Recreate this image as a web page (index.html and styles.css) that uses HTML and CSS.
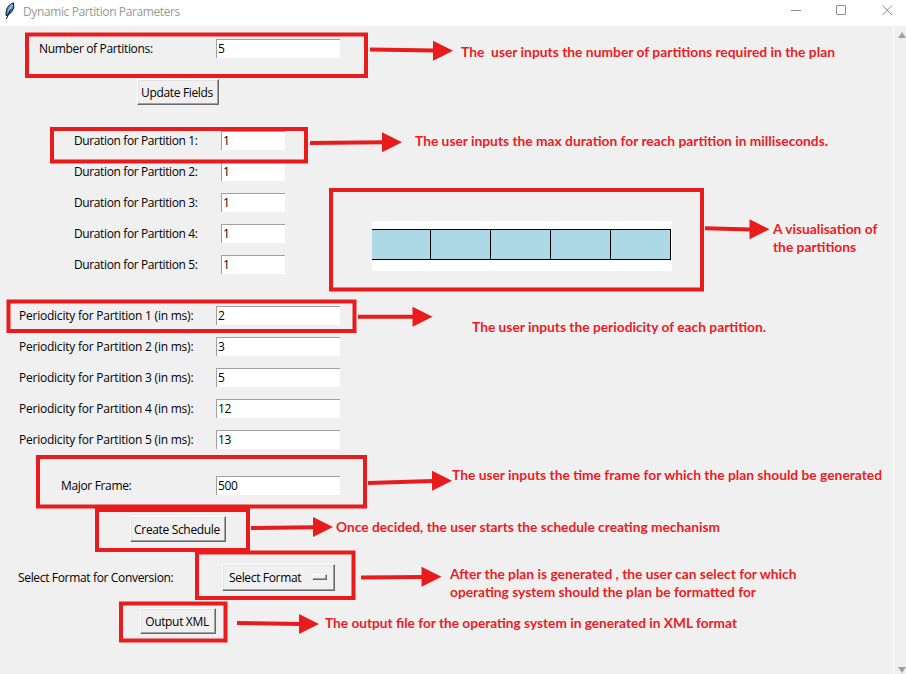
FILE: index.html
```html
<!DOCTYPE html>
<html lang="en">
<head>
<meta charset="utf-8">
<title>Dynamic Partition Parameters</title>
<link rel="stylesheet" href="styles.css">
</head>
<body>
<header class="titlebar">
  <svg class="feather" width="12" height="18" viewBox="0 0 12 18">
    <path d="M9.500 1C5.500 2 2.500 5.500 2.200 10L2 13.500 4.200 13 8 9.500 9.800 5.500Z" fill="#4b86cf" stroke="#111" stroke-width="1"/>
    <path d="M8.300 2.500 4.200 9.500" stroke="#8fc0f0" stroke-width="1.800"/>
    <path d="M6.500 7.500 2.300 17" stroke="#111" stroke-width="1" fill="none"/>
  </svg>
  <h1 class="title">Dynamic Partition Parameters</h1>
  <svg class="controls" width="106" height="20" viewBox="0 0 106 20" fill="none" stroke="#8e8e8e">
    <path d="M0 10.500H10"/><rect x="45.500" y="5.500" width="9" height="9" rx=".5"/><path d="M91.500 5.500l9.500 9.500M101 5.500l-9.500 9.500"/>
  </svg>
</header>
<div class="window">
  <main class="form">
    <div class="row number"><label class="label">Number of Partitions:</label><span class="entry">5</span></div>
    <button class="button update">Update Fields</button>
    <section class="middle">
      <div class="stack durations">
        <div class="row"><label class="label">Duration for Partition 1:</label><span class="entry short">1</span></div>
        <div class="row"><label class="label">Duration for Partition 2:</label><span class="entry short">1</span></div>
        <div class="row"><label class="label">Duration for Partition 3:</label><span class="entry short">1</span></div>
        <div class="row"><label class="label">Duration for Partition 4:</label><span class="entry short">1</span></div>
        <div class="row"><label class="label">Duration for Partition 5:</label><span class="entry short">1</span></div>
      </div>
      <div class="chart"><div class="bar"><i></i><i></i><i></i><i></i><i></i></div></div>
    </section>
    <section class="stack periods">
      <div class="row"><label class="label">Periodicity for Partition 1 (in ms):</label><span class="entry">2</span></div>
      <div class="row"><label class="label">Periodicity for Partition 2 (in ms):</label><span class="entry">3</span></div>
      <div class="row"><label class="label">Periodicity for Partition 3 (in ms):</label><span class="entry">5</span></div>
      <div class="row"><label class="label">Periodicity for Partition 4 (in ms):</label><span class="entry">12</span></div>
      <div class="row"><label class="label">Periodicity for Partition 5 (in ms):</label><span class="entry">13</span></div>
    </section>
    <div class="row major"><label class="label">Major Frame:</label><span class="entry">500</span></div>
    <button class="button create">Create Schedule</button>
    <div class="row format"><label class="label">Select Format for Conversion:</label><button class="button select">Select Format<span class="knob"></span></button></div>
    <button class="button output">Output XML</button>
  </main>
  <div class="scrollbar"><span class="up"></span><span class="down"></span></div>
</div>
<svg class="notes" width="906" height="674" viewBox="0 0 906 674">
  <defs><path id="head" d="M-20-10 0 0-20 10Z"/></defs>
  <g class="frames">
    <rect x="27" y="34.500" width="339" height="41.500"/>
    <rect x="52" y="129" width="254" height="32.500"/>
    <rect x="331" y="190" width="371" height="99.500"/>
    <rect x="8.500" y="301.500" width="346" height="29.500"/>
    <rect x="38" y="457" width="327" height="49.500"/>
    <rect x="97" y="510" width="151" height="40"/>
    <rect x="197" y="552.500" width="156.500" height="45.500"/>
    <rect x="121" y="603.500" width="104.500" height="37"/>
  </g>
  <g class="shafts">
    <path d="M370 49.500 434 50.600M310 143 384 142.300M705 228.300 751 229.400M358 316.800H414M368 483 433 481M251 528 314 527.200M361 577.500 423 577M237 623 300 624"/>
  </g>
  <g class="heads">
    <use href="#head" x="453" y="50.700"/><use href="#head" x="402" y="142.300"/><use href="#head" x="769.500" y="229.300"/><use href="#head" x="432.500" y="316.800"/><use href="#head" x="452" y="480.700"/><use href="#head" x="333" y="527"/><use href="#head" x="441.500" y="576.800"/><use href="#head" x="319" y="624"/>
  </g>
  <g class="captions">
    <text x="461" y="57" textLength="374" lengthAdjust="spacingAndGlyphs">The&#160; user inputs the number of partitions required in the plan</text>
    <text x="415" y="146" textLength="413" lengthAdjust="spacingAndGlyphs">The user inputs the max duration for reach partition in milliseconds.</text>
    <text x="773" y="234" textLength="104.500" lengthAdjust="spacingAndGlyphs">A visualisation of</text>
    <text x="773" y="252" textLength="83" lengthAdjust="spacingAndGlyphs">the partitions</text>
    <text x="472" y="332" textLength="294" lengthAdjust="spacingAndGlyphs">The user inputs the periodicity of each partition.</text>
    <text x="452" y="480" textLength="430" lengthAdjust="spacingAndGlyphs">The user inputs the time frame for which the plan should be generated</text>
    <text x="336" y="532" textLength="384" lengthAdjust="spacingAndGlyphs">Once decided, the user starts the schedule creating mechanism</text>
    <text x="450" y="579" textLength="346.500" lengthAdjust="spacingAndGlyphs">After the plan is generated , the user can select for which</text>
    <text x="450" y="597" textLength="306" lengthAdjust="spacingAndGlyphs">operating system should the plan be formatted for</text>
    <text x="325" y="628" textLength="412" lengthAdjust="spacingAndGlyphs">The output file for the operating system in generated in XML format</text>
  </g>
</svg>
</body>
</html>
```
FILE: styles.css
```css
* { box-sizing: border-box; }
body {
  margin: 0;
  width: 906px;
  height: 674px;
  overflow: hidden;
  position: relative;
  background: #f0f0f0;
  color: #000;
  font: 12px/19px "Open Sans", "Noto Sans", sans-serif;
  letter-spacing: -0.34px;
}
.titlebar { display: flex; align-items: center; height: 26px; padding: 0 9px 0 4px; background: #fff; }
.feather { margin-top: -5px; }
.title { margin: -4px auto 0 7px; font-size: 12px; font-weight: 400; color: #999; letter-spacing: -0.39px; }
.controls { margin-top: -6px; }
.window { display: flex; height: 648px; }
.form { flex: 1; display: flex; flex-direction: column; align-items: flex-start; padding-top: 13px; }
.row { display: flex; height: 19px; }
.label { white-space: nowrap; flex: none; }
.entry { flex: none; width: 124px; height: 19px; padding-left: 1px; line-height: 18px; background: #fff; border-top: 1px solid #a0a0a0; border-left: 1px solid #a0a0a0; }
.short { width: 64px; }
.number { padding-left: 39px; }
.number .label { width: 177px; }
.button { height: 26px; padding: 0 2px 0 0; font: inherit; letter-spacing: inherit; color: #000; background: #f0f0f0; border: 1px solid; border-color: #fff #696969 #696969 #fff; box-shadow: inset -1px -1px #a0a0a0, inset 1px 1px #e3e3e3; white-space: nowrap; }
.update { width: 82px; margin: 21px 0 26px 137px; }
.middle { display: flex; height: 143px; }
.stack { display: flex; flex-direction: column; gap: 12px; }
.durations { padding-left: 74px; }
.durations .label { width: 147px; letter-spacing: -0.38px; }
.chart { width: 300px; height: 50px; margin: 90px 0 0 87px; padding: 8px 1px 0 0; background: #fff; }
.bar { display: grid; grid-template-columns: 59px repeat(4, 60px); width: 299px; height: 31px; border: solid #000; border-width: 1px 0; background: #add8e6; }
.bar i { border-right: 1px solid #000; }
.periods { margin-top: 32px; padding-left: 19px; }
.periods .label { width: 197px; letter-spacing: -0.23px; }
.major { margin-top: 27px; padding-left: 61px; }
.major .label { width: 155px; }
.create { width: 96px; margin: 21px 0 22px 130px; }
.format { height: 27px; padding-left: 18px; }
.format .label { width: 204px; line-height: 27px; }
.select { display: flex; align-items: center; width: 113px; height: 27px; padding-left: 6px; }
.knob { width: 15px; height: 6px; margin: 0 0 2px 11px; border: 1px solid; border-color: #fff #696969 #696969 #fff; box-shadow: inset -1px -1px #a0a0a0; }
.output { width: 76px; margin: 17px 0 0 140px; }
.scrollbar { display: flex; flex-direction: column; justify-content: space-between; align-items: flex-end; width: 13px; padding: 6px 0 0; border-left: 1px solid #fff; }
.up, .down { border: 4px solid transparent; }
.up { border-bottom: 6px solid #a0a0a0; border-top: 0; }
.down { border-top: 6px solid #a0a0a0; border-bottom: 0; margin-bottom: 1px; }
.notes { position: absolute; left: 0; top: 0; }
.frames { fill: none; stroke: #e81c1c; stroke-width: 4; }
.shafts { fill: none; stroke: #e81c1c; stroke-width: 4; }
.heads { fill: #e81c1c; }
.captions { fill: #ed1c24; font: 700 13.8px Lato, sans-serif; letter-spacing: 0; }
```
